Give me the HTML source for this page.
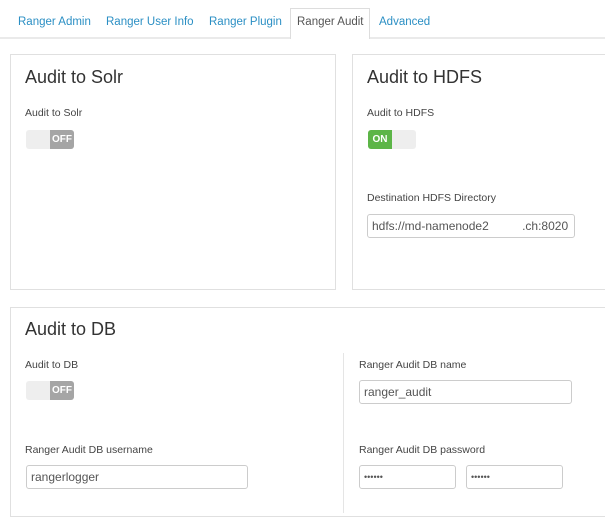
<!DOCTYPE html>
<html><head><meta charset="utf-8"><style>
*{box-sizing:border-box;margin:0;padding:0}
body{width:605px;height:509px;overflow:hidden;background:#fff;font-family:"Liberation Sans",Arial,sans-serif;color:#333;position:relative}
.a{position:absolute;white-space:nowrap}
.tab{font-size:11.5px;color:#2b8fc4;top:16px}
.panel{position:absolute;border:1px solid #e0e0e0;background:#fff}
.h{font-size:18px;color:#333}
.l{font-size:10.5px;color:#444}
.tg{position:absolute;width:48px;height:19px;background:#eee;border-radius:3px;overflow:hidden}
.tg span{position:absolute;top:0;width:24px;height:19px;font-size:10px;color:#fff;text-align:center;line-height:19px;font-weight:bold}
.in{position:absolute;height:24px;border:1px solid #ccc;border-radius:3px;font-size:12px;color:#555;padding:0 7px;line-height:22px;white-space:nowrap;overflow:hidden}
</style></head><body>
<div class="a" style="left:0;top:37px;width:605px;height:2px;background:#eaeaea"></div>
<div class="a" style="left:290px;top:8px;width:80px;height:31px;border:1px solid #ddd;border-bottom:none;background:#fff"></div>
<div class="a tab" style="left:18px">Ranger Admin</div>
<div class="a tab" style="left:106px">Ranger User Info</div>
<div class="a tab" style="left:209px">Ranger Plugin</div>
<div class="a tab" style="left:297px;color:#555">Ranger Audit</div>
<div class="a tab" style="left:379px">Advanced</div>

<div class="panel" style="left:10px;top:54px;width:326px;height:236px"></div>
<div class="a h" style="left:25px;top:67px">Audit to Solr</div>
<div class="a l" style="left:25px;top:107px">Audit to Solr</div>
<div class="tg" style="left:26px;top:130px"><span style="left:24px;background:#a5a5a5">OFF</span></div>

<div class="panel" style="left:352px;top:54px;width:260px;height:236px"></div>
<div class="a h" style="left:367px;top:67px">Audit to HDFS</div>
<div class="a l" style="left:367px;top:107px">Audit to HDFS</div>
<div class="tg" style="left:368px;top:130px"><span style="left:0;background:#5cb547">ON</span></div>
<div class="a l" style="left:367px;top:192px">Destination HDFS Directory</div>
<div class="in" style="left:367px;top:214px;width:208px;padding-left:4px">hdfs://md-namenode2 &nbsp;&nbsp;&nbsp;&nbsp;&nbsp;&nbsp;&nbsp;&nbsp;&nbsp;.ch:8020</div>

<div class="panel" style="left:10px;top:307px;width:602px;height:210px"></div>
<div class="a" style="left:343px;top:353px;width:1px;height:160px;background:#e5e5e5"></div>
<div class="a h" style="left:25px;top:319px">Audit to DB</div>
<div class="a l" style="left:25px;top:359px">Audit to DB</div>
<div class="tg" style="left:26px;top:381px"><span style="left:24px;background:#a5a5a5">OFF</span></div>
<div class="a l" style="left:25px;top:444px">Ranger Audit DB username</div>
<div class="in" style="left:26px;top:465px;width:222px;padding-left:4px">rangerlogger</div>
<div class="a l" style="left:359px;top:359px">Ranger Audit DB name</div>
<div class="in" style="left:359px;top:380px;width:213px;padding-left:4px">ranger_audit</div>
<div class="a l" style="left:359px;top:444px">Ranger Audit DB password</div>
<div class="in" style="left:359px;top:465px;width:97px;padding-left:4px;font-size:9px">••••••</div>
<div class="in" style="left:466px;top:465px;width:97px;padding-left:4px;font-size:9px">••••••</div>
</body></html>
